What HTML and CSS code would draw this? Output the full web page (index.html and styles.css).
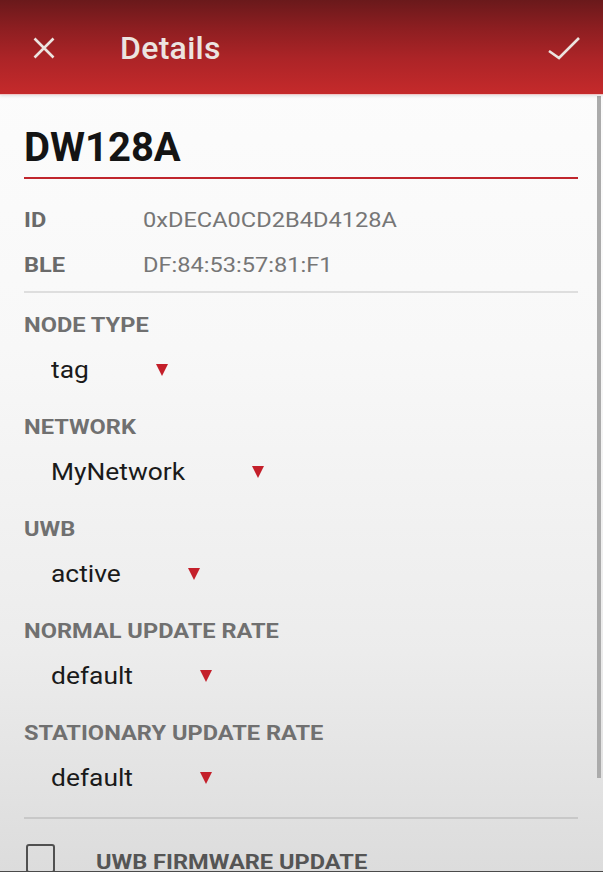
FILE: index.html
```html
<!DOCTYPE html>
<html>
<head>
<meta charset="utf-8">
<link rel="stylesheet" href="styles.css">
</head>
<body>
<div class="screen">
  <header class="appbar">
    <svg class="icon-close" width="22" height="22" viewBox="0 0 22 22"><path d="M1.5 1.5 L20.5 20.5 M20.5 1.5 L1.5 20.5" stroke="#ece4e0" stroke-width="2.6" fill="none"/></svg>
    <h1 class="appbar-title">Details</h1>
    <svg class="icon-check" width="32" height="24" viewBox="0 0 32 24"><polyline points="1,15 11,22 31,2" stroke="#ece4e0" stroke-width="2.6" fill="none"/></svg>
  </header>
  <main class="content">
    <h2 class="device-name">DW128A</h2>
    <div class="info">
      <div class="info-row"><span class="info-label"><span class="wide">ID</span></span><span class="info-value wide">0xDECA0CD2B4D4128A</span></div>
      <div class="info-row"><span class="info-label"><span class="wide">BLE</span></span><span class="info-value wide">DF:84:53:57:81:F1</span></div>
    </div>
    <div class="fields">
      <div class="field">
        <div class="field-label"><span class="wide">NODE TYPE</span></div>
        <div class="spinner"><span class="spinner-text">tag</span><span class="caret"></span></div>
      </div>
      <div class="field">
        <div class="field-label"><span class="wide">NETWORK</span></div>
        <div class="spinner"><span class="spinner-text">MyNetwork</span><span class="caret"></span></div>
      </div>
      <div class="field">
        <div class="field-label"><span class="wide">UWB</span></div>
        <div class="spinner"><span class="spinner-text">active</span><span class="caret"></span></div>
      </div>
      <div class="field">
        <div class="field-label"><span class="wide">NORMAL UPDATE RATE</span></div>
        <div class="spinner"><span class="spinner-text">default</span><span class="caret"></span></div>
      </div>
      <div class="field">
        <div class="field-label"><span class="wide">STATIONARY UPDATE RATE</span></div>
        <div class="spinner"><span class="spinner-text">default</span><span class="caret"></span></div>
      </div>
    </div>
    <div class="check-row">
      <span class="checkbox"></span>
      <span class="check-label wide">UWB FIRMWARE UPDATE</span>
    </div>
  </main>
  <div class="scrollbar"></div>
</div>
</body>
</html>
```
FILE: styles.css
```css
* { box-sizing: border-box; }
html, body { margin: 0; padding: 0; }
body {
  width: 603px;
  height: 872px;
  overflow: hidden;
  font-family: Roboto, "Liberation Sans", sans-serif;
}
.screen {
  position: relative;
  width: 603px;
  height: 872px;
  overflow: hidden;
  display: flex;
  flex-direction: column;
  background: linear-gradient(#fdfdfd 0%, #f8f8f8 40%, #ececec 75%, #dcdcdc 100%);
  border-bottom: 1px solid #4a4a4a;
}
.appbar {
  flex: 0 0 94px;
  height: 94px;
  display: flex;
  align-items: center;
  padding: 2px 23px 0 33px;
  background: linear-gradient(#6a191b 0%, #8d1e21 30%, #ac2427 62%, #c52a2b 100%);
  box-shadow: 0 1px 0 #f0c8c8, 0 2px 3px rgba(0,0,0,0.12);
  position: relative;
  z-index: 1;
}
.icon-close { display: block; flex: none; }
.appbar-title {
  margin: 0 0 0 65px;
  flex: 1;
  font-size: 32px;
  font-weight: 500;
  color: #ece4e0;
  line-height: 40px;
  letter-spacing: 0.3px;
}
.icon-check { display: block; flex: none; margin-top: -1px; }
.content {
  flex: 1;
  padding: 30px 25px 0 24px;
}
.device-name {
  margin: 0;
  font-size: 40px;
  font-weight: 700;
  line-height: 48px;
  color: #141414;
  padding-bottom: 5px;
  border-bottom: 2px solid #c0262d;
}
/* text in the reference is horizontally stretched */
.wide {
  display: inline-block;
  font-size: 23.6px;
  transform: scaleY(0.847);
}
.info {
  padding-top: 19px;
  border-bottom: 2px solid #dedede;
  padding-bottom: 3px;
}
.info-row {
  display: flex;
  height: 45px;
  line-height: 45px;
}
.info-label {
  width: 119px;
  font-weight: 700;
  color: #6a6a6a;
}
.info-value {
  color: #767676;
}
.fields {
  padding-top: 18px;
  border-bottom: 2px solid #c8c8c8;
}
.field {
  height: 102px;
}
.fields .field:last-child { height: 98px; }
.field-label {
  font-weight: 700;
  line-height: 28px;
  height: 28px;
  color: #707070;
}
.spinner {
  margin-top: 8px;
  height: 46px;
  display: flex;
  align-items: center;
  padding-left: 27px;
  gap: 67px;
}
.spinner-text {
  display: inline-block;
  font-size: 26.4px;
  line-height: 46px;
  color: #1a1a1a;
  transform: scaleY(0.91);
}
.caret {
  width: 0;
  height: 0;
  border-left: 6.5px solid transparent;
  border-right: 6.5px solid transparent;
  border-top: 12px solid #c41f2a;
  margin-top: -1px;
}
.check-row {
  display: flex;
  align-items: flex-start;
  padding-top: 25px;
  padding-left: 2px;
}
.checkbox {
  width: 29px;
  height: 29px;
  border: 2.5px solid #505050;
  border-radius: 3px;
  flex: none;
}
.check-label {
  margin-left: 41px;
  font-weight: 700;
  color: #555;
  line-height: 28px;
  margin-top: 4px;
}
.scrollbar {
  position: absolute;
  top: 96px;
  left: 597px;
  width: 4px;
  height: 682px;
  background: #ababab;
}
```
